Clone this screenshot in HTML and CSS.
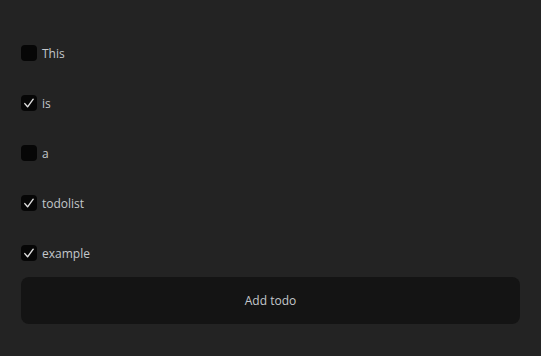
FILE: index.html
```html
<!DOCTYPE html>
<html lang="en">
<head>
    <meta charset="UTF-8">
    <meta name="viewport" content="width=device-width, initial-scale=1.0">
    <title>Todo list</title>
    <link rel="stylesheet" href="styles.css">
</head>
<body>

<div class="container">
    <ul class="todos">
        <li class="todo"><span class="box"></span><span class="label">This</span></li>
        <li class="todo done"><span class="box"><svg viewBox="0 0 16 16"><path d="M3.8 8.6 L6.6 11.8 L12.2 4.2"/></svg></span><span class="label">is</span></li>
        <li class="todo"><span class="box"></span><span class="label">a</span></li>
        <li class="todo done"><span class="box"><svg viewBox="0 0 16 16"><path d="M3.8 8.6 L6.6 11.8 L12.2 4.2"/></svg></span><span class="label">todolist</span></li>
        <li class="todo done"><span class="box"><svg viewBox="0 0 16 16"><path d="M3.8 8.6 L6.6 11.8 L12.2 4.2"/></svg></span><span class="label">example</span></li>
    </ul>
    <button class="add-btn">Add todo</button>
</div>

</body>
</html>
```

FILE: styles.css
```css
body { margin: 0; background-color: #232323; font-family: "Segoe UI", "Open Sans", "Noto Sans", sans-serif; font-size: 12px; color: #c4c8cc; }
.container { padding: 28px 21px 0 21px; }
.todos { list-style: none; margin: 0; padding: 0; }
.todo { height: 50px; display: flex; align-items: center; gap: 5px; }
.box { width: 16px; height: 16px; border-radius: 4px; background-color: #060606; display: flex; }
.box svg { width: 16px; height: 16px; fill: none; stroke: #e2e2e2; stroke-width: 1.4; stroke-linecap: round; stroke-linejoin: round; }
.label { line-height: 16px; padding-top: 1px; }
.add-btn { display: block; width: 100%; height: 47px; margin-top: -1px; border: none; border-radius: 8px; background-color: #141414; color: #c4c8cc; font-family: inherit; font-size: 12px; cursor: pointer; }
```
